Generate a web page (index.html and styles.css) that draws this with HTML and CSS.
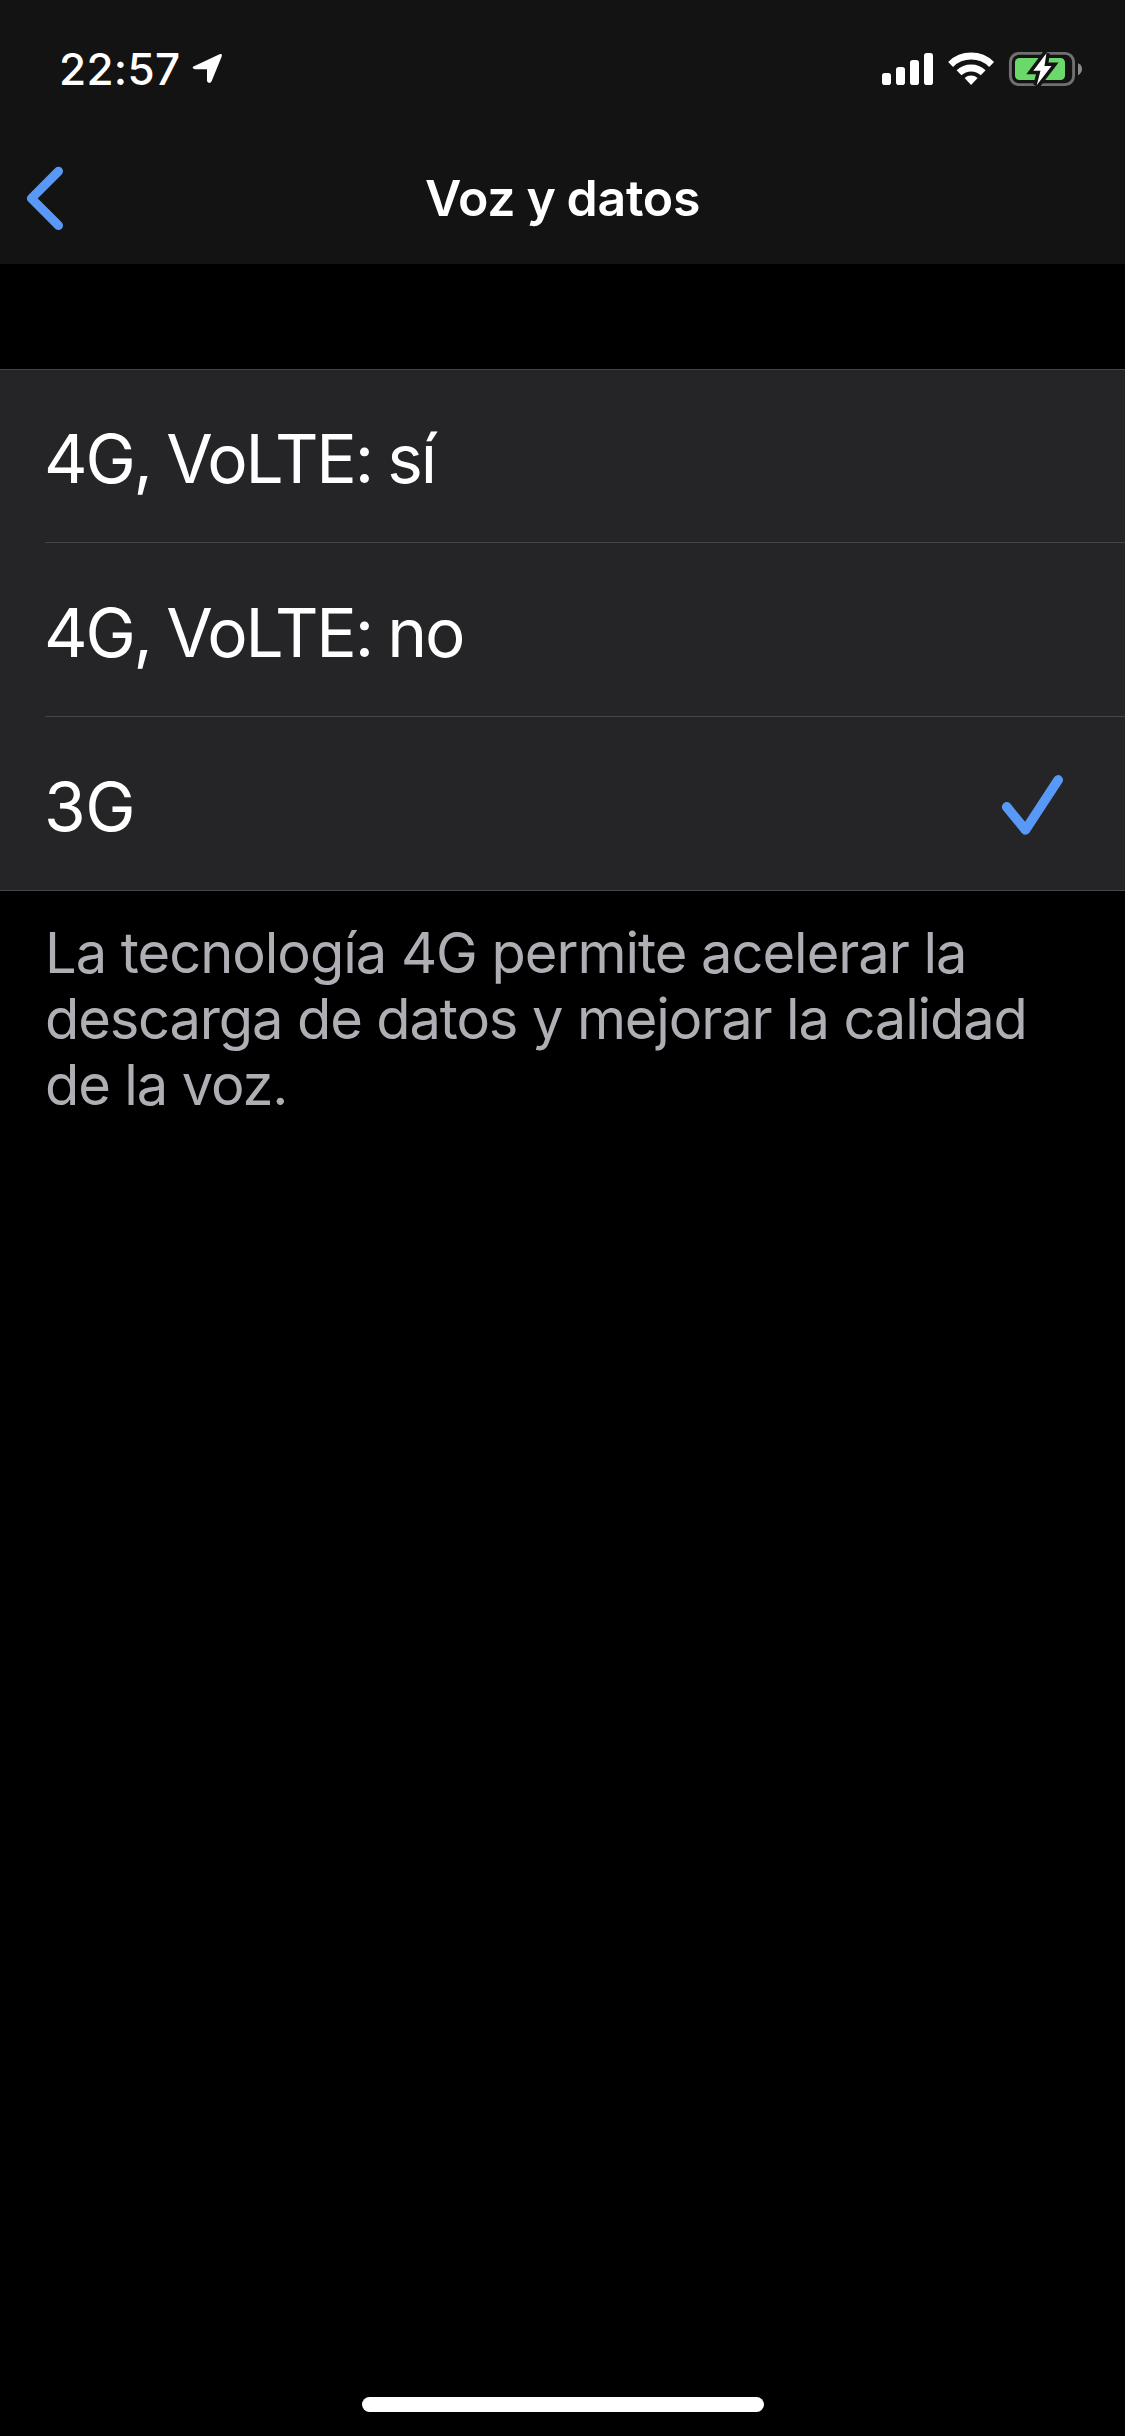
FILE: index.html
```html
<!DOCTYPE html>
<html lang="es">
<head>
<meta charset="utf-8">
<title>Voz y datos</title>
<link rel="stylesheet" href="styles.css">
</head>
<body>
<div class="screen">
  <header class="header">
    <div class="status">
      <div class="status-left">
        <span class="time">22:57</span>
        <svg class="location" width="34" height="34" viewBox="190 52 34 34"><path d="M194 66.2 L219.5 54.3 Q222.8 53.2 221.7 56.5 L211.6 81.3 Q210.2 83.6 208.2 82.6 Q207 82 207 80.5 L207 69.3 L195 69.2 Q192.6 68.9 192.6 67.5 Q192.8 66.7 194 66.2Z" fill="#fff"/></svg>
      </div>
      <svg class="indicators" width="206" height="40" viewBox="880 49 206 40">
        <g fill="#fff">
          <rect x="882" y="73" width="9" height="12" rx="2.8"/>
          <rect x="896" y="67" width="9" height="18" rx="2.8"/>
          <rect x="910" y="60" width="9" height="25" rx="2.8"/>
          <rect x="924" y="53" width="9" height="32" rx="2.8"/>
        </g>
        <g fill="none" stroke="#fff" stroke-width="7">
          <path d="M950.6 64.4A29.5 29.5 0 0 1 991.6 64.4"/>
          <path d="M959 72.7A17.6 17.6 0 0 1 983.2 72.7"/>
        </g>
        <path d="M964.6 77.9A9.8 9.8 0 0 1 977.6 77.9L971.1 85Z" fill="#fff"/>
        <rect x="1010.4" y="53.4" width="63.2" height="31.2" rx="8.5" fill="none" stroke="#707071" stroke-width="2.9"/>
        <path d="M1078 63.2Q1082 65 1082 69T1078 75.3Z" fill="#8b8b8c"/>
        <rect x="1015" y="58" width="50" height="22" rx="4.5" fill="#6bd86a"/>
        <path d="M1046.4 53.3L1033.3 70.7H1040.5L1036.7 85.3L1051.5 66H1044.5Z" fill="#fff" stroke="#131313" stroke-width="7" paint-order="stroke"/>
      </svg>
    </div>
    <div class="navbar">
      <svg class="back" width="42" height="68" viewBox="24 164 42 68"><path d="M58.5 171.3L31.4 198.4L58.5 225.5" fill="none" stroke="#5899f7" stroke-width="9" stroke-linecap="round" stroke-linejoin="round"/></svg>
      <h1 class="title">Voz y datos</h1>
    </div>
  </header>
  <ul class="options">
    <li class="option"><span>4G, VoLTE: sí</span></li>
    <li class="option"><span>4G, VoLTE: no</span></li>
    <li class="option selected"><span>3G</span>
      <svg class="check" width="66" height="66" viewBox="1000 772 66 66"><path d="M1006.7 805.9L1025.5 828.9L1058.2 778.9" fill="none" stroke="#5899f7" stroke-width="9.6" stroke-linecap="round" stroke-linejoin="round"/></svg>
    </li>
  </ul>
  <p class="note"><span class="note-lead">La tecnología 4G permite acelerar la</span><br>descarga de datos y mejorar la calidad<br>de la voz.</p>
  <div class="home"></div>
</div>
</body>
</html>
```
FILE: styles.css
```css
* { box-sizing: border-box; }
body { margin: 0; background: #000; }
.screen {
  display: flex;
  flex-direction: column;
  width: 1125px;
  height: 2436px;
  color: #fff;
  font-family: Inter, "Liberation Sans", sans-serif;
}
.header { height: 264px; background: #131313; }
.status {
  display: flex;
  justify-content: space-between;
  height: 132px;
  padding: 49px 39px 0 59px;
}
.status-left { display: flex; gap: 10px; height: 40px; }
.time { width: 121px; font-size: 44px; font-weight: 550; line-height: 40px; letter-spacing: 0.3px; white-space: nowrap; }
.location { margin-top: 3px; }
.navbar {
  display: grid;
  grid-template-columns: 42px 1fr 42px;
  align-items: center;
  height: 132px;
  padding: 0 24px;
}
.title { margin: 0; font-size: 50px; font-weight: 570; line-height: 60px; letter-spacing: -0.3px; word-spacing: -1.2px; text-align: center; }
.options {
  margin: 105px 0 0;
  padding: 0;
  list-style: none;
  background: #252527;
  border-top: 1px solid #454547;
  border-bottom: 1px solid #454547;
}
.option {
  display: flex;
  align-items: center;
  justify-content: space-between;
  height: 174px;
  margin-left: 45px;
  padding: 5px 59px 0 0;
  font-size: 67.5px;
  letter-spacing: -2.2px;
  word-spacing: -1.4px;
  border-top: 1px solid #454547;
}
.option span { margin-left: -1px; }
.option:first-child { height: 172px; border-top: 0; }
.option.selected { letter-spacing: -0.4px; }
.note { margin: 0; padding: 29px 0 0 45px; color: #aeaeb4; font-size: 56px; line-height: 66px; letter-spacing: -1.13px; white-space: nowrap; }
.note-lead { letter-spacing: -1.02px; }
.home { width: 402px; height: 15px; margin: auto auto 24px 362px; border-radius: 8px; background: #fff; }
```
